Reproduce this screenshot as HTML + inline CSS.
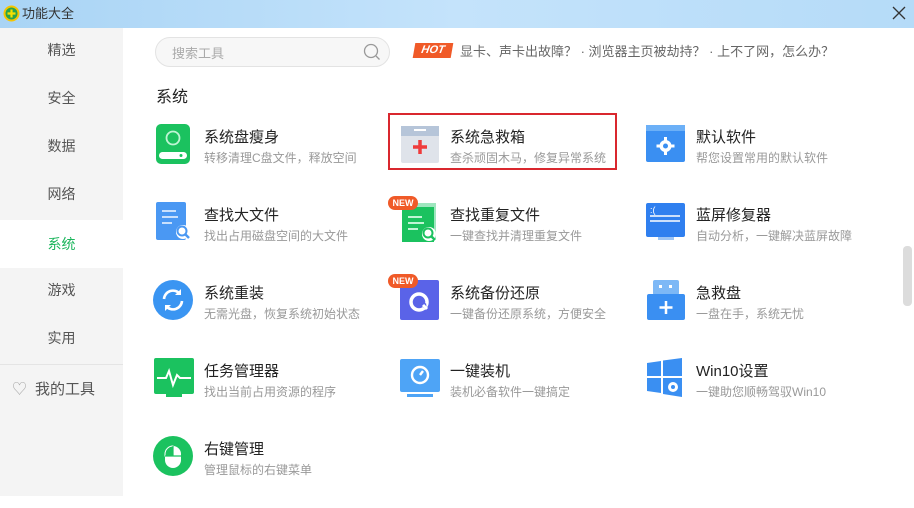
<!DOCTYPE html><html><head><meta charset="utf-8"><style>
*{margin:0;padding:0;box-sizing:border-box}
body{width:914px;height:508px;overflow:hidden;background:#fff;font-family:"Liberation Sans","Noto Sans CJK SC",sans-serif;position:relative}
.title{position:absolute;left:0;top:0;width:914px;height:28px;background:linear-gradient(90deg,#a9d4f5,#c4e3fb 50%,#b5dbf8)}
.title span{position:absolute;left:22px;top:3px;font-size:13px;color:#333}
.side{position:absolute;left:0;top:28px;width:123px;height:468px;background:#f4f4f4}
.si{position:absolute;left:0;width:123px;text-align:center;font-size:14px;color:#555}
.sel{background:#fff;color:#1bb55c;height:48px;line-height:48px}
.abs{position:absolute}
.t{position:absolute;font-size:15px;color:#222}
.s{position:absolute;font-size:12px;color:#999}
.ic{position:absolute;width:40px;height:40px}
.new{position:absolute;background:#f05a28;color:#fff;font-size:9px;font-weight:bold;border-radius:8px;width:30px;height:14px;line-height:14px;text-align:center}
</style></head><body>
<div class="title"><svg class="abs" style="left:3px;top:5px" width="17" height="17"><circle cx="8.5" cy="8.5" r="8" fill="#f6c500"/><circle cx="8.5" cy="8.5" r="6" fill="#2aa34a"/><path d="M8.5 4.5v8M4.5 8.5h8" stroke="#f6e000" stroke-width="2.2"/></svg><span>功能大全</span>
<svg class="abs" style="left:892px;top:6px" width="14" height="14"><path d="M1 1L13 13M13 1L1 13" stroke="#333" stroke-width="1.3"/></svg></div>
<div class="side">
<div class="si" style="top:12px">精选</div>
<div class="si" style="top:60px">安全</div>
<div class="si" style="top:108px">数据</div>
<div class="si" style="top:156px">网络</div>
<div class="si sel" style="top:192px">系统</div>
<div class="si" style="top:252px">游戏</div>
<div class="si" style="top:300px">实用</div>
<div class="abs" style="left:0;top:336px;width:123px;border-top:1px solid #e4e4e4"></div>
<div class="abs" style="left:12px;top:350px;font-size:15px;color:#555"><span style="color:#aaa">♡</span><span style="margin-left:8px">我的工具</span></div>
</div>
<div class="abs" style="left:155px;top:37px;width:235px;height:30px;border:1px solid #e3e3e3;border-radius:15px;background:#f7f7f7"></div>
<div class="abs" style="left:172px;top:43px;font-size:13px;color:#aaa">搜索工具</div>
<svg class="abs" style="left:363px;top:43px" width="18" height="18"><circle cx="8" cy="8" r="6.5" fill="none" stroke="#999" stroke-width="1.3"/><path d="M13 13l3.5 3.5" stroke="#999" stroke-width="1.3"/></svg>
<div class="abs" style="left:414px;top:43px;width:38px;height:15px;background:#f05a28;color:#fff;font-size:11px;font-weight:bold;font-style:italic;text-align:center;line-height:15px;transform:skewX(-10deg)">HOT</div>
<div class="abs" style="left:460px;top:41px;font-size:13px;color:#666">显卡、声卡出故障？ · 浏览器主页被劫持？ · 上不了网，怎么办？</div>
<div class="abs" style="left:156px;top:83px;font-size:16px;color:#222">系统</div>
<div class="abs" style="left:388px;top:113px;width:229px;height:57px;border:2px solid #d9272e"></div>

<svg class="ic" style="left:155px;top:124px"><rect x="1" y="0" width="34" height="40" rx="5" fill="#1bc25f"/><circle cx="18" cy="14" r="6.5" fill="none" stroke="#bff5d4" stroke-width="1.8"/><rect x="4" y="28" width="28" height="7" rx="3.5" fill="#fff"/><circle cx="26" cy="31.5" r="1.5" fill="#1bc25f"/></svg>
<div class="t" style="left:204px;top:126px">系统盘瘦身</div><div class="s" style="left:204px;top:149px">转移清理C盘文件，释放空间</div>
<svg class="ic" style="left:400px;top:124px"><rect x="1" y="2" width="38" height="37" rx="2" fill="#dfe3ea"/><rect x="1" y="2" width="38" height="10" fill="#b6c5d9"/><path d="M14 6h12" stroke="#fff" stroke-width="2"/><path d="M20 16v14M13 23h14" stroke="#ef3b3b" stroke-width="3.5"/></svg>
<div class="t" style="left:450px;top:126px">系统急救箱</div><div class="s" style="left:450px;top:149px">查杀顽固木马，修复异常系统</div>
<svg class="ic" style="left:646px;top:124px"><rect x="0" y="1" width="39" height="37" rx="2" fill="#3a8ff2"/><rect x="0" y="1" width="39" height="6" fill="#6cb0f7"/><circle cx="19.5" cy="22" r="6" fill="#fff"/><circle cx="19.5" cy="22" r="2.5" fill="#3a8ff2"/><path d="M19.5 13v4M19.5 27v4M10.5 22h4M24.5 22h4" stroke="#fff" stroke-width="3"/></svg>
<div class="t" style="left:696px;top:126px">默认软件</div><div class="s" style="left:696px;top:149px">帮您设置常用的默认软件</div>

<svg class="ic" style="left:155px;top:202px"><rect x="1" y="0" width="30" height="38" rx="2" fill="#4a98f3"/><path d="M7 9h14M7 15h16M7 21h10" stroke="#c9e0fc" stroke-width="2"/><circle cx="28" cy="30" r="7" fill="#fff"/><circle cx="27" cy="29" r="4.5" fill="none" stroke="#4a98f3" stroke-width="2"/><path d="M30 32l4 4" stroke="#4a98f3" stroke-width="2.5"/></svg>
<div class="t" style="left:204px;top:204px">查找大文件</div><div class="s" style="left:204px;top:227px">找出占用磁盘空间的大文件</div>
<svg class="ic" style="left:400px;top:202px"><rect x="6" y="1" width="30" height="36" fill="#9ee6be"/><rect x="2" y="5" width="32" height="35" fill="#1bc25f"/><path d="M8 15h14M8 21h16M8 27h10" stroke="#bff5d4" stroke-width="2"/><circle cx="29" cy="32" r="7" fill="#fff"/><circle cx="28" cy="31" r="4.5" fill="none" stroke="#1bc25f" stroke-width="2"/><path d="M31 34l4 4" stroke="#1bc25f" stroke-width="2.5"/></svg>
<div class="new" style="left:388px;top:196px">NEW</div>
<div class="t" style="left:450px;top:204px">查找重复文件</div><div class="s" style="left:450px;top:227px">一键查找并清理重复文件</div>
<svg class="ic" style="left:646px;top:202px"><rect x="0" y="1" width="39" height="34" rx="2" fill="#2f7fef"/><path d="M4 14h30M4 19h30" stroke="#fff" stroke-width="1.6"/><text x="4" y="11" font-size="9" fill="#fff" font-family="Liberation Sans">:(</text><rect x="12" y="35" width="16" height="3" fill="#9cc4f5"/></svg>
<div class="t" style="left:696px;top:204px">蓝屏修复器</div><div class="s" style="left:696px;top:227px">自动分析，一键解决蓝屏故障</div>

<svg class="ic" style="left:153px;top:280px"><circle cx="20" cy="20" r="20" fill="#3a95f2"/><path d="M11 19a9 9 0 0 1 16-5" fill="none" stroke="#fff" stroke-width="2.6"/><path d="M28 9v6h-6z" fill="#fff"/><path d="M29 21a9 9 0 0 1-16 5" fill="none" stroke="#fff" stroke-width="2.6"/><path d="M12 31v-6h6z" fill="#fff"/></svg>
<div class="t" style="left:204px;top:282px">系统重装</div><div class="s" style="left:204px;top:305px">无需光盘，恢复系统初始状态</div>
<svg class="ic" style="left:399px;top:280px"><rect x="1" y="0" width="39" height="40" rx="2" fill="#5a63e8"/><circle cx="20" cy="22" r="8" fill="none" stroke="#fff" stroke-width="3.5"/><path d="M22 26l6 4-1-7z" fill="#5a63e8"/><path d="M24 25l4 4" stroke="#fff" stroke-width="3"/></svg>
<div class="new" style="left:388px;top:274px">NEW</div>
<div class="t" style="left:450px;top:282px">系统备份还原</div><div class="s" style="left:450px;top:305px">一键备份还原系统，方便安全</div>
<svg class="ic" style="left:646px;top:280px"><rect x="7" y="0" width="26" height="15" rx="2" fill="#7db8f6"/><rect x="13" y="5" width="3" height="3" fill="#fff"/><rect x="23" y="5" width="3" height="3" fill="#fff"/><rect x="1" y="14" width="38" height="26" rx="2" fill="#3a8ff2"/><path d="M20 21v13M13.5 27.5h13" stroke="#fff" stroke-width="2.5"/></svg>
<div class="t" style="left:696px;top:282px">急救盘</div><div class="s" style="left:696px;top:305px">一盘在手，系统无忧</div>

<svg class="ic" style="left:154px;top:358px"><rect x="0" y="0" width="40" height="36" rx="2" fill="#1bc25f"/><path d="M3 20h9l3-7 4 14 4-10 3 3h11" fill="none" stroke="#fff" stroke-width="2"/><rect x="12" y="36" width="16" height="3" fill="#1bc25f"/></svg>
<div class="t" style="left:204px;top:360px">任务管理器</div><div class="s" style="left:204px;top:383px">找出当前占用资源的程序</div>
<svg class="ic" style="left:400px;top:358px"><rect x="0" y="1" width="40" height="33" rx="2" fill="#4ea4f6"/><circle cx="20" cy="17" r="8" fill="none" stroke="#fff" stroke-width="2.4"/><path d="M20 17l3-4" stroke="#fff" stroke-width="2.4"/><rect x="7" y="36" width="26" height="3" fill="#4ea4f6"/></svg>
<div class="t" style="left:450px;top:360px">一键装机</div><div class="s" style="left:450px;top:383px">装机必备软件一键搞定</div>
<svg class="ic" style="left:646px;top:357px"><path d="M1 6l14-2v15H1z M17 3.5L36 1v18H17z M1 21h14v15L1 34z M17 21h19v19l-19-3z" fill="#3a8ff2"/><circle cx="27" cy="30" r="5" fill="#fff"/><circle cx="27" cy="30" r="2" fill="#3a8ff2"/></svg>
<div class="t" style="left:696px;top:360px">Win10设置</div><div class="s" style="left:696px;top:383px">一键助您顺畅驾驭Win10</div>

<svg class="ic" style="left:153px;top:436px"><circle cx="20" cy="20" r="20" fill="#1bc25f"/><rect x="12" y="10" width="16" height="22" rx="8" fill="#fff"/><path d="M20 10v10h-8v-2a8 8 0 0 1 8-8z" fill="#1bc25f" stroke="#fff" stroke-width="1"/><path d="M12 20h16M20 10v10" stroke="#1bc25f" stroke-width="1.2"/></svg>
<div class="t" style="left:204px;top:438px">右键管理</div><div class="s" style="left:204px;top:461px">管理鼠标的右键菜单</div>
<div class="abs" style="left:903px;top:246px;width:9px;height:60px;background:#dcdcdc;border-radius:4px"></div>
</body></html>
